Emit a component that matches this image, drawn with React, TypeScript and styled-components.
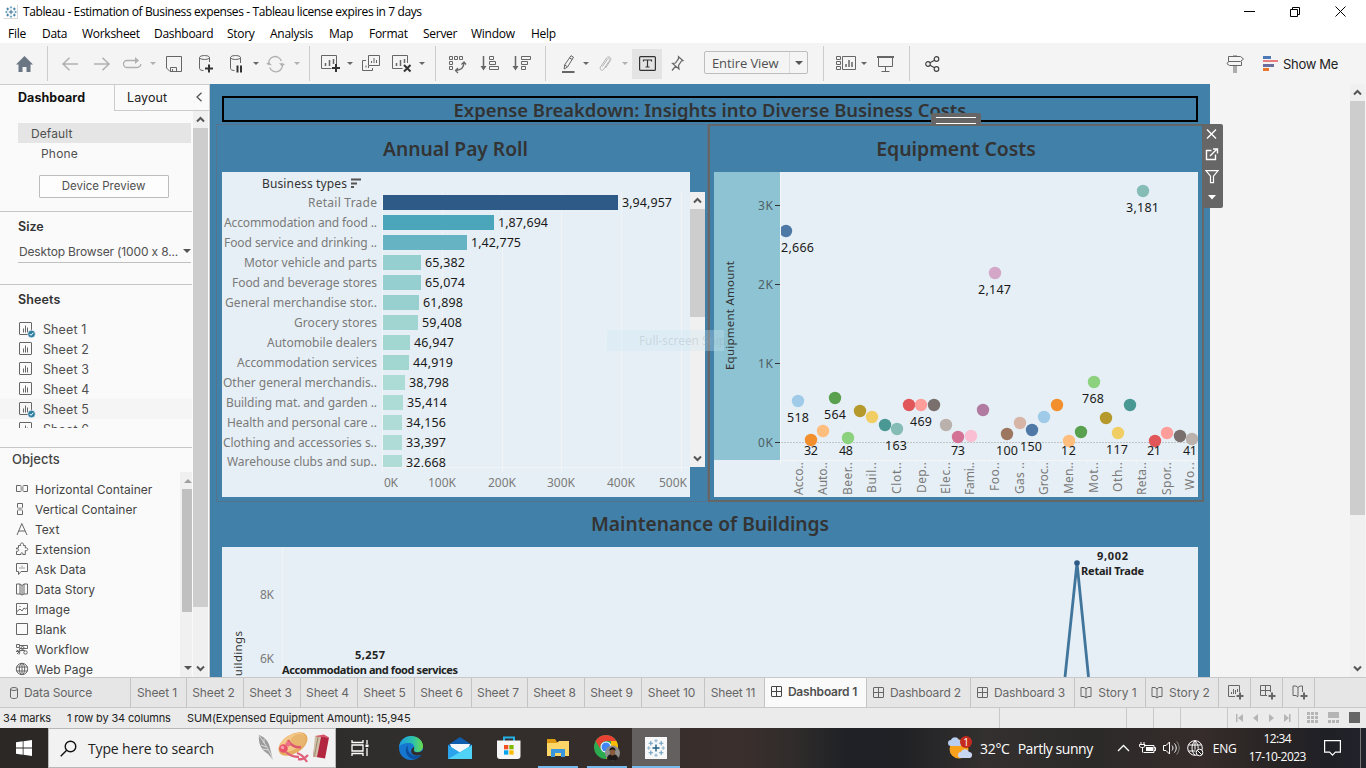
import React from "react";
import styled, { createGlobalStyle } from "styled-components";

const UI = `"Open Sans", "Noto Sans", sans-serif`;
const BOOK = `"Noto Sans", "Open Sans", sans-serif`;
const BENTON = `Inter, "Liberation Sans", sans-serif`;

const GlobalStyle = createGlobalStyle`
  * { box-sizing: border-box; }
  body { margin: 0; overflow: hidden; background: #fff; font-family: ${UI}; font-feature-settings: "calt" 0; }
  svg { display: block; flex: none; overflow: visible; }
`;

const Window = styled.div`
  width: 1366px;
  height: 768px;
  display: flex;
  flex-direction: column;
  overflow: hidden;
`;

const Txt = styled.span<{ $s?: number; $ls?: number; $c?: string; $w?: number; $f?: string }>`
  font-family: ${(p) => p.$f || BENTON};
  font-size: ${(p) => p.$s || 12}px;
  letter-spacing: ${(p) => p.$ls || 0}px;
  color: ${(p) => p.$c || "#505050"};
  font-weight: ${(p) => p.$w || 400};
  white-space: nowrap;
`;

/* ---------- title bar and menu ---------- */
const TitleBar = styled.header`
  height: 24px;
  display: flex;
  align-items: center;
  padding: 0 0 2px 3px;
`;
const AppIcon = styled.div`
  width: 15px;
  height: 15px;
  margin: 1px 5px 0 0;
  border: 1px solid #d8d8d8;
  border-left-color: #fff;
  border-top-color: #fff;
`;
const WindowButtons = styled.div`
  margin-left: auto;
  display: flex;
  gap: 35px;
  padding-right: 20px;
  align-items: center;
  height: 20px;
`;
const MenuBar = styled.nav`
  height: 19px;
  display: flex;
  align-items: center;
  padding-left: 8px;
`;
const MenuItem = styled.div<{ $w: number }>`
  width: ${(p) => p.$w}px;
  font: 12px ${UI};
  letter-spacing: -0.28px;
  white-space: nowrap;
  color: #000;
`;

/* ---------- toolbar ---------- */
const Toolbar = styled.div`
  height: 41px;
  background: #f4f4f4;
  display: flex;
  align-items: center;
`;
const Tool = styled.div<{ $ml: number; $w: number }>`
  margin-left: ${(p) => p.$ml}px;
  width: ${(p) => p.$w}px;
  flex: none;
  display: flex;
  justify-content: center;
`;
const Sep = styled.div<{ $ml: number }>`
  margin-left: ${(p) => p.$ml}px;
  width: 1px;
  height: 35px;
  background: #ccc;
  flex: none;
`;
const CaretBox = styled.div<{ $ml: number; $c?: string }>`
  margin-left: ${(p) => p.$ml}px;
  border: 3px solid transparent;
  border-top: 3px solid ${(p) => p.$c || "#666"};
  border-bottom: 0;
  flex: none;
`;
const TextToggle = styled.div`
  margin-left: 4px;
  width: 30px;
  height: 30px;
  background: #e4e4e4;
  display: flex;
  align-items: center;
  justify-content: center;
`;
const Select = styled.div`
  margin-left: 20px;
  width: 104px;
  height: 23px;
  border: 1px solid #bdbdbd;
  border-radius: 2px;
  display: flex;
  align-items: center;
  justify-content: space-between;
  padding-left: 7px;
  margin-bottom: 2px;
`;
const SelectArrow = styled.div`
  width: 18px;
  height: 21px;
  border-left: 1px solid #dcdcdc;
  display: flex;
  align-items: center;
  justify-content: center;
`;
const Triangle = styled.div<{ $s?: number; $c?: string; $up?: boolean }>`
  border: ${(p) => p.$s || 4}px solid transparent;
  border-${(p) => (p.$up ? "bottom" : "top")}-color: ${(p) => p.$c || "#555"};
  border-${(p) => (p.$up ? "top" : "bottom")}-width: 0;
`;

/* ---------- side pane ---------- */
const Main = styled.div`
  height: 593px;
  display: flex;
  background: #f4f4f4;
  overflow: hidden;
`;
const Side = styled.aside`
  width: 210px;
  background: #fafafa;
  border-top: 1px solid #ccc;
  border-right: 1px solid #ccc;
  display: flex;
  flex-direction: column;
  flex: none;
`;
const SideTabs = styled.div`
  display: flex;
  height: 26px;
  flex: none;
`;
const SideTab = styled.div<{ $on?: boolean }>`
  width: ${(p) => (p.$on ? 114 : 95)}px;
  padding: ${(p) => (p.$on ? "0 0 2px 18px" : "0 7px 1px 12px")};
  border-left: ${(p) => (p.$on ? 0 : 1)}px solid #ccc;
  border-bottom: ${(p) => (p.$on ? 0 : 1)}px solid #ccc;
  display: flex;
  align-items: center;
  justify-content: space-between;
`;
const SideBody = styled.div`
  flex: 1;
  display: flex;
  min-height: 0;
`;
const SideContent = styled.div`
  width: 192px;
  display: flex;
  flex-direction: column;
  margin-right: 1px;
`;
const Section = styled.section<{ $h?: number; $line?: boolean; $pt?: number }>`
  height: ${(p) => (p.$h ? p.$h + "px" : "auto")};
  ${(p) => (p.$h ? "flex: none;" : "flex: 1; min-height: 0;")}
  padding-top: ${(p) => p.$pt || 0}px;
  border-bottom: ${(p) => (p.$line ? "1px solid #c6c6c6" : "0")};
  display: flex;
  flex-direction: column;
`;
const DeviceRow = styled.div<{ $on?: boolean }>`
  margin-left: 18px;
  height: 20px;
  flex: none;
  margin-right: 1px;
  padding-left: ${(p) => (p.$on ? 13 : 23)}px;
  background: ${(p) => (p.$on ? "#e5e5e5" : "none")};
  display: flex;
  align-items: center;
`;
const PreviewButton = styled.button`
  margin: 12px 0 0 39px;
  width: 130px;
  height: 23px;
  padding: 0 1px 2px 0;
  border: 1px solid #bdbdbd;
  border-radius: 1px;
  background: #fdfdfd;
  line-height: 18px;
`;
const Heading = styled.div<{ $pt: number; $pl?: number }>`
  padding: ${(p) => p.$pt}px 0 0 ${(p) => p.$pl ?? 18}px;
  line-height: 18px;
  height: ${(p) => p.$pt + 18}px;
  flex: none;
`;
const SizePicker = styled.div`
  margin: 7px 1px 0 18px;
  height: 22px;
  padding: 0 0 1px 1px;
  border-bottom: 1px solid #c0c0c0;
  display: flex;
  align-items: center;
  justify-content: space-between;
`;
const SheetList = styled.div`
  margin-top: 12px;
  height: 109px;
  overflow: hidden;
`;
const SheetRow = styled.div<{ $hover?: boolean }>`
  height: 20px;
  padding-left: 19px;
  display: flex;
  align-items: center;
  gap: 8px;
  background: ${(p) => (p.$hover ? "#f5f5f5" : "none")};
`;
const ObjectsArea = styled.div`
  flex: 1;
  min-height: 0;
  margin-top: 5px;
  display: flex;
  justify-content: space-between;
  overflow: hidden;
`;
const ObjectList = styled.div`
  padding: 7px 0 0 15px;
`;
const ObjectRow = styled.div`
  height: 20px;
  display: flex;
  align-items: center;
  gap: 6px;
`;
const InnerScroll = styled.div`
  width: 12px;
  background: #f0f0f0;
  display: flex;
  flex-direction: column;
  align-items: flex-end;
  padding: 7px 0 7px 2px;
  justify-content: space-between;
`;
const InnerThumb = styled.div`
  width: 10px;
  height: 123px;
  background: #c0c0c0;
  margin: 6px 0 auto;
`;
const Scroll = styled.div<{ $h?: number }>`
  width: 15px;
  ${(p) => (p.$h ? `height: ${p.$h}px;` : "")}
  background: #f0f0f0;
  display: flex;
  flex-direction: column;
  justify-content: space-between;
  align-items: center;
  flex: none;
`;
const ScrollEnd = styled.div`
  height: 17px;
  display: flex;
  align-items: center;
  flex: none;
`;
const Thumb = styled.div<{ $h: number }>`
  width: 15px;
  height: ${(p) => p.$h}px;
  background: #cdcdcd;
  margin-bottom: auto;
  flex: none;
`;

/* ---------- dashboard ---------- */
const Canvas = styled.main`
  width: 1000px;
  background: #4180a8;
  padding: 12px 12px 0;
  flex: none;
`;
const TitleBox = styled.div`
  height: 26px;
  border: 2px solid #000;
  display: flex;
  justify-content: center;
  align-items: center;
  overflow: hidden;
  padding-top: 1px;
`;
const ChartTitle = styled.h2<{ $h: number; $pr?: number; $pb?: number }>`
  margin: 0;
  padding: 0 ${(p) => p.$pr || 0}px ${(p) => p.$pb || 0}px 0;
  height: ${(p) => p.$h}px;
  display: flex;
  align-items: center;
  justify-content: center;
`;
const ZoneRow = styled.div`
  margin: 2px -6px 0;
  height: 378px;
  display: flex;
`;
const Zone = styled.section<{ $active?: boolean; $w: number }>`
  position: relative;
  width: ${(p) => p.$w}px;
  border: ${(p) => (p.$active ? "2px solid #666" : "1px solid #55748b")};
  padding: 0 ${(p) => (p.$active ? 4 : 0)}px;
`;
const ZoneBody = styled.div`
  display: flex;
  padding-left: 5px;
`;
const Plot = styled.svg`
  background: #e6eff5;
  font-family: ${BOOK};
  font-size: 12px;
  overflow: hidden !important;
`;
const PlotScroll = styled.div`
  padding: 20px 0 0 0;
`;
const Grip = styled.div`
  position: absolute;
  left: 221px;
  top: -13px;
  width: 50px;
  height: 12px;
  background: #666;
  border-radius: 2px 2px 0 0;
  padding: 4px 5px;
  &::before {
    content: "";
    display: block;
    height: 5px;
    border-top: 1px solid #fff;
    border-bottom: 1px solid #fff;
  }
`;
const ZoneTools = styled.div`
  position: absolute;
  left: 492px;
  top: -2px;
  width: 21px;
  height: 84px;
  background: #666;
  border-radius: 0 2px 2px 0;
`;
const Ghost = styled.div`
  position: absolute;
  left: 390px;
  top: 205px;
  width: 117px;
  height: 21px;
  background: rgba(205, 232, 245, 0.3);
  display: flex;
  align-items: center;
  padding: 0 0 2px 32px;
  z-index: 2;
`;

/* ---------- bottom strips ---------- */
const TabStrip = styled.div`
  height: 31px;
  background: #e6e6e6;
  border-top: 1px solid #c8c8c8;
  border-bottom: 1px solid #c8c8c8;
  display: flex;
`;
const Tab = styled.div<{ $w: number; $on?: boolean }>`
  width: ${(p) => p.$w}px;
  flex: none;
  border-right: 1px solid #c4c4c4;
  background: ${(p) => (p.$on ? "#fafafa" : "none")};
  display: flex;
  align-items: center;
  justify-content: center;
  gap: 5px;
  padding: 0 3px ${(p) => (p.$on ? 2 : 0)}px 0;
`;
const SourceTab = styled(Tab)`
  justify-content: flex-start;
  padding-left: 9px;
`;
const AddTab = styled(Tab)`
  padding: 0 0 0 1px;
`;
const Status = styled.div`
  height: 20px;
  background: #ebebeb;
  display: flex;
  align-items: center;
`;
const StatusText = styled.div<{ $w: number }>`
  width: ${(p) => p.$w}px;
  flex: none;
  padding: 0 0 2px 3px;
  line-height: 16px;
`;
const StatusCell = styled.div<{ $w: number }>`
  width: ${(p) => p.$w}px;
  height: 20px;
  border-left: 1px solid #c8c8c8;
  flex: none;
  display: flex;
  align-items: center;
  padding-bottom: 1px;
`;
const Taskbar = styled.footer`
  height: 40px;
  display: flex;
  align-items: center;
  background: linear-gradient(90deg, #2b2826 0, #2b2826 10%, #302e2d 28%, #352d2a 45%, #3b2f2d 54%, #302c2b 58%, #1f2126 62%, #202125 66%, #33302f 72%, #2c2a29 80%, #352c2b 88%, #292524 93%, #1f2026 97%, #22242b 100%);
`;
const StartButton = styled.div`
  width: 48px;
  padding-left: 16px;
`;
const SearchBox = styled.div`
  width: 288px;
  height: 40px;
  background: #f2f2f2;
  border: 1px solid #b8b8b8;
  display: flex;
  align-items: center;
  padding-left: 11px;
  gap: 11px;
`;
const AppButton = styled.div<{ $w: number; $on?: boolean; $line?: number }>`
  position: relative;
  width: ${(p) => p.$w}px;
  height: 40px;
  flex: none;
  background: ${(p) => (p.$on ? "#63605f" : "none")};
  display: flex;
  align-items: center;
  justify-content: center;
  &::after {
    content: "";
    position: absolute;
    bottom: 0;
    left: 50%;
    width: ${(p) => p.$line || 0}px;
    margin-left: ${(p) => -(p.$line || 0) / 2}px;
    height: 2px;
    background: #76b9ed;
  }
`;
const Tray = styled.div<{ $ml: number }>`
  margin-left: ${(p) => p.$ml}px;
  flex: none;
  display: flex;
`;
const Clock = styled.div`
  width: 66px;
  margin-left: 8px;
  margin-right: 1px;
  height: 37px;
  display: flex;
  flex-direction: column;
  align-items: center;
  line-height: 18px;
`;

/* ---------- icons ---------- */
type IconProps = { w: number; h: number; c?: string; sw?: number; children: React.ReactNode };
const Icon = ({ w, h, c = "#666", sw = 1, children }: IconProps) => (
  <svg width={w} height={h} viewBox={`0 0 ${w} ${h}`} fill="none" stroke={c} strokeWidth={sw}>
    {children}
  </svg>
);

const TableauMark = ({ size, light }: { size: number; light?: boolean }) => (
  <svg width={size} height={size} viewBox="0 0 22 22" stroke={light ? "#6d9fbe" : "#2f7297"} strokeWidth={light ? 1.1 : 1.4} fill="none">
    <path d="M11 7.500v7M7.500 11h7" stroke="#1f5f87" strokeWidth="1.400" />
    <path d="M11 2v3.500M9.300 3.700h3.400M11 16.500v3.500M9.300 18.300h3.400M3.700 9.300v3.400M2 11h3.500M18.300 9.300v3.400M16.500 11h3.500" stroke={light ? "#8fb6cd" : "#5b97b8"} />
    <path d="M5.800 4v4.500M3.600 6.200h4.500M16.200 4v4.500M13.900 6.200h4.500M5.800 13.500v4.500M3.600 15.800h4.500M16.200 13.500v4.500M13.900 15.800h4.500" />
  </svg>
);

const ScrollArrow = ({ down }: { down?: boolean }) => (
  <Icon w={9} h={7} c="#555" sw={2}>
    <path d={down ? "M1 1.500l3.500 3.500 3.500-3.500" : "M1 5.500l3.500-3.500 3.500 3.500"} />
  </Icon>
);

const SheetIcon = ({ used }: { used?: boolean }) => (
  <Icon w={16} h={16}>
    <rect x="0.500" y="1.500" width="12" height="12" rx="0.500" />
    <path d="M4.500 7.500v4M6.500 4.500v7M8.500 6.500v5" />
    {used && (
      <>
        <circle cx="12.500" cy="13" r="3.800" fill="#2f7fa5" stroke="#fafafa" strokeWidth="0.600" />
        <path d="M10.800 13l1.200 1.300 2.200-2.500" stroke="#fff" />
      </>
    )}
  </Icon>
);

const GridIcon = ({ c = "#666" }: { c?: string }) => (
  <Icon w={12} h={12} c={c}>
    <rect x="0.500" y="0.500" width="10" height="10" rx="0.500" />
    <path d="M5.500 0.500v10M0.500 5.500h10" />
  </Icon>
);
const BookIcon = () => (
  <Icon w={13} h={13}>
    <path d="M6 3L4 1.500H1v9h3L6 12l2-1.500h3v-9H8zM6 3v9" />
  </Icon>
);

const objects: [string, React.ReactNode][] = [
  ["Horizontal Container", <><path d="M1.500 3.500h4v6h-4zM8.500 3.500h4v6h-4z" /><path d="M5.500 4h3v5h-3z" fill="#aaa" stroke="#ccc" /></>],
  ["Vertical Container", <><path d="M2.500 1.500h5v4h-5zM2.500 8.500h5v4h-5z" /><path d="M3 5.500h4v3H3z" fill="#aaa" stroke="#ccc" /></>],
  ["Text", <path d="M2 13L6.800 1.500 12 13M3.600 9h6.600" />],
  ["Extension", <path d="M3.500 6V3.500h2.200c-.6-2 .2-2.500 1.300-2.500s1.900.6 1.300 2.500h2V6c1.600-.5 2.500.2 2.500 1.300S12 9 10.300 8.500v4H7.800c.3-1.200-.2-1.700-.9-1.700s-1.300.6-.9 1.700H1.500V9.200c1.300.5 2.200-.2 2.200-1.100S2.700 6.500 1.500 7V6z" />],
  ["Ask Data", <><path d="M1.500 1.500h11v8H6l-2.500 3V9.500h-2z" /><path d="M5 7V5M7 7V3.500M9 7V5" stroke="#999" /></>],
  ["Data Story", <path d="M7 3.500L5 2H1.500v10H5l2 1 2-1h3.500V2H9zM7 3.500V13M5 2v10M9 2v10" />],
  ["Image", <><path d="M1.500 1.500h11v11h-11z" /><path d="M2 9.500l3-2.500 2 2 2-3 1.500 1 2-1.500M4.500 4.500h1" /></>],
  ["Blank", <path d="M1.500 1.500h11v11h-11z" />],
  ["Workflow", <><path d="M1.500 2.500h3v3h-3zM5 3.500h7.500v3H4.500v2H10M1 9.500h4l-1 3M1.500 8l3 1.500L2 12" /><circle cx="7.500" cy="6" r="1.500" /><circle cx="10.500" cy="10.500" r="1.700" /></>],
  ["Web Page", <><circle cx="7" cy="7" r="5.700" /><ellipse cx="7" cy="7" rx="2.700" ry="5.700" /><path d="M1.500 5h11M1.500 9h11M7 1.300v11.400" /></>],
];

/* ---------- data ---------- */
const menu: [string, number][] = [
  ["File", 34], ["Data", 40], ["Worksheet", 72], ["Dashboard", 73], ["Story", 43], ["Analysis", 59],
  ["Map", 40], ["Format", 54], ["Server", 48], ["Window", 60], ["Help", 40],
];

// label, label width, bar width, value, value width, bar colour
const payroll: [string, number, number, string, number, string][] = [
  ["Retail Trade", 69, 235, "3,94,957", 50, "#2e5a87"],
  ["Accommodation and food ..", 153, 111, "1,87,694", 50, "#4ba6bc"],
  ["Food service and drinking ..", 153, 84, "1,42,775", 50, "#66b4c3"],
  ["Motor vehicle and parts", 133, 38, "65,382", 40, "#95cfd0"],
  ["Food and beverage stores", 145, 38, "65,074", 40, "#95cfd0"],
  ["General merchandise stor..", 152, 36, "61,898", 40, "#98d0d0"],
  ["Grocery stores", 83, 35, "59,408", 40, "#a0d5d1"],
  ["Automobile dealers", 110, 27, "46,947", 40, "#a2d6d1"],
  ["Accommodation services", 140, 26, "44,919", 40, "#a2d6d1"],
  ["Other general merchandis..", 154, 22, "38,798", 40, "#addbd6"],
  ["Building mat. and garden ..", 151, 20, "35,414", 40, "#addbd6"],
  ["Health and personal care ..", 150, 19, "34,156", 40, "#b0dcd7"],
  ["Clothing and accessories s..", 154, 19, "33,397", 40, "#b0dcd7"],
  ["Warehouse clubs and sup..", 150, 19, "32,668", 40, "#b0dcd7"],
];
const payAxis: [string, number, number][] = [
  ["0K", 384, 14], ["100K", 428, 28], ["200K", 488, 28], ["300K", 547, 28], ["400K", 607, 28], ["500K", 659, 28],
];

const dots: [number, number, string][] = [
  [786, 231, "#4e79a7"], [798, 401, "#a0cbe8"], [811, 440, "#f28e2b"], [823, 431, "#ffbe7d"], [835, 398, "#59a14f"],
  [848, 438, "#8cd17d"], [860, 411, "#b6992d"], [872, 417, "#f1ce63"], [885, 425, "#499894"], [897, 429, "#86bcb6"],
  [909, 405, "#e15759"], [921, 405, "#ff9d9a"], [934, 405, "#79706e"], [946, 425, "#bab0ac"], [958, 437, "#d37295"],
  [971, 436, "#fabfd2"], [983, 410, "#b07aa1"], [995, 273, "#d4a6c8"], [1007, 434, "#9d7660"], [1020, 423, "#d7b5a6"],
  [1032, 430, "#4e79a7"], [1044, 417, "#a0cbe8"], [1057, 405, "#f28e2b"], [1069, 441, "#ffbe7d"], [1081, 432, "#59a14f"],
  [1094, 382, "#8cd17d"], [1106, 418, "#b6992d"], [1118, 433, "#f1ce63"], [1130, 405, "#499894"], [1143, 191, "#86bcb6"],
  [1155, 441, "#e15759"], [1167, 433, "#ff9d9a"], [1180, 436, "#79706e"], [1192, 439, "#bab0ac"],
];
const dotLabels: [string, number, number, number][] = [
  ["2,666", 781, 248, 33], ["3,181", 1126, 208, 33], ["2,147", 978, 290, 33], ["518", 787, 418, 22], ["32", 804, 451, 14],
  ["564", 824, 415, 22], ["48", 839, 451, 14], ["163", 885, 446, 22], ["469", 910, 422, 22], ["73", 951, 451, 14],
  ["100", 996, 451, 22], ["150", 1020, 447, 22], ["12", 1061, 451, 15], ["768", 1082, 399, 22], ["117", 1106, 450, 22],
  ["21", 1147, 451, 14], ["41", 1183, 451, 14],
];
const categories: [string, number, number][] = [
  ["Acco..", 799, 495], ["Auto..", 823, 495], ["Beer..", 848, 495], ["Buil..", 872, 493], ["Clot..", 897, 494], ["Dep..", 922, 493],
  ["Elec..", 946, 494], ["Fami..", 970, 495], ["Foo..", 995, 491], ["Gas ..", 1020, 494], ["Groc..", 1044, 495], ["Men..", 1069, 494],
  ["Mot..", 1094, 493], ["Oth..", 1118, 492], ["Reta..", 1142, 495], ["Spor..", 1167, 495], ["Wo..", 1190, 490],
];

const PayrollChart = () => (
  <Plot width={468} height={325} viewBox="222 172 468 325">
    <path d="M382.500 192v280M442.500 192v280M502.500 192v280M561.500 192v280M621.500 192v280M681.500 192v280M382 467.500h308" stroke="#f1f4f6" />
    <text x="262" y="188" textLength="85" fill="#333">Business types</text>
    <path d="M351 179.500h10M351 183.500h6M351 187h3" stroke="#555" strokeWidth="2" />
    <clipPath id="rows"><rect x="222" y="190" width="468" height="277" /></clipPath>
    <g clipPath="url(#rows)">
      {payroll.map(([name, lw, bw, value, vw, color], i) => (
        <g key={name}>
          <text x={377 - lw} y={207 + i * 20 - (i === 13 ? 1 : 0)} textLength={lw} fill="#7a7a7a">{name}</text>
          <rect x="383" y={195 + i * 20} width={bw} height="15" fill={color} />
          <text x={387 + bw} y={207 + i * 20} textLength={vw} fill="#1a1a1a" fontSize="12.500">{value}</text>
        </g>
      ))}
    </g>
    {payAxis.map(([t, x, w]) => (
      <text key={t} x={x} y="487" textLength={w} fill="#7a7a7a">{t}</text>
    ))}
  </Plot>
);

const EquipmentChart = () => (
  <Plot width={484} height={325} viewBox="714 172 484 325">
    <rect x="714" y="172" width="66" height="288" fill="#8dc3d2" />
    <path d="M780.500 172v293M780 460.500h418" stroke="#f3f5f6" />
    <path d={[793, 817, 842, 866, 891, 915, 940, 964, 989, 1013, 1038, 1062, 1087, 1111, 1136, 1160, 1185].map((x) => `M${x}.500 460v3`).join("")} stroke="#f3f5f6" />
    <path d="M781 442.500h417" stroke="#bfc4c6" strokeDasharray="2 1" />
    {[["3K", 205], ["2K", 284], ["1K", 363], ["0K", 442]].map(([t, y]) => (
      <g key={t}>
        <text x="758" y={Number(y) + 5} textLength="15" fill="#4f6168">{t}</text>
        <path d={`M775 ${y}.500h5`} stroke="#333" />
      </g>
    ))}
    <text transform="translate(734 370) rotate(-90)" textLength="109" fill="#333" fontSize="11.500">Equipment Amount</text>
    <clipPath id="pane"><rect x="781" y="172" width="417" height="288" /></clipPath>
    <g clipPath="url(#pane)">
      {dots.map(([x, y, c]) => <circle key={x} cx={x} cy={y} r="6.200" fill={c} />)}
    </g>
    {dotLabels.map(([t, x, y, w]) => (
      <text key={x} x={x} y={y + 4} textLength={w} fill="#1a1a1a" fontSize="12.500">{t}</text>
    ))}
    {categories.map(([t, x, y]) => (
      <text key={x} transform={`translate(${x + 4} ${y}) rotate(-90)`} textLength={y - 462} fill="#7a7a7a">{t}</text>
    ))}
  </Plot>
);

const MaintenanceChart = () => (
  <Plot width={976} height={130} viewBox="222 547 976 130">
    <path d="M282.500 547v130" stroke="#f1f4f6" />
    <text x="260" y="599" textLength="14" fill="#7a7a7a">8K</text>
    <text x="260" y="663" textLength="14" fill="#7a7a7a">6K</text>
    <text transform="translate(242 684) rotate(-90)" textLength="53" fill="#333" fontSize="11.500">Buildings</text>
    <path d="M1065 677L1077 563L1088.500 677" fill="none" stroke="#41759c" strokeWidth="2.800" />
    <circle cx="1077" cy="563" r="2.800" fill="#2e5a87" />
    <g fontWeight="700" fontSize="11" fill="#222">
      <text x="1097" y="560" textLength="31">9,002</text>
      <text x="1081" y="575" textLength="63">Retail Trade</text>
      <text x="355" y="659" textLength="30">5,257</text>
      <text x="282" y="674" textLength="176">Accommodation and food services</text>
    </g>
  </Plot>
);

const T = "#333";
const sheetTabs: [string, number][] = [
  ["Sheet 1", 56], ["Sheet 2", 57], ["Sheet 3", 57], ["Sheet 4", 57], ["Sheet 5", 57], ["Sheet 6", 57],
  ["Sheet 7", 56], ["Sheet 8", 57], ["Sheet 9", 57], ["Sheet 10", 63], ["Sheet 11", 60],
];

export default function App() {
  return (
    <Window>
      <GlobalStyle />
      <TitleBar>
        <AppIcon><TableauMark size={14} /></AppIcon>
        <Txt $f={UI} $c="#000" $s={12} $ls={-0.39}>Tableau - Estimation of Business expenses - Tableau license expires in 7 days</Txt>
        <WindowButtons>
          <Icon w={11} h={11} c="#000"><path d="M0 5.500h11" /></Icon>
          <Icon w={10} h={11} c="#000"><path d="M.5 3.500h7v7h-7zM2.500 3.500v-2h7v7h-2" /></Icon>
          <Icon w={11} h={11} c="#000"><path d="M.5 .5l10 10M10.500 .5l-10 10" /></Icon>
        </WindowButtons>
      </TitleBar>
      <MenuBar>{menu.map(([t, w]) => <MenuItem key={t} $w={w}>{t}</MenuItem>)}</MenuBar>

      <Toolbar>
        <Tool $ml={16} $w={17}><Icon w={17} h={16} c="none"><path d="M8.500 0L17 8.500h-2.500V16h-4v-5h-4v5h-4V8.500H0z" fill="#6a7684" /></Icon></Tool>
        <Sep $ml={14} />
        <Tool $ml={14} $w={16}><Icon w={16} h={14} c="#b0b0b0" sw={1.5}><path d="M16 7H1M7.500 .7L1 7l6.500 6.300" /></Icon></Tool>
        <Tool $ml={16} $w={16}><Icon w={16} h={14} c="#b0b0b0" sw={1.5}><path d="M0 7h15M8.500 .7L15 7l-6.500 6.300" /></Icon></Tool>
        <Tool $ml={13} $w={19}><Icon w={19} h={12} c="#b0b0b0" sw={1.3}><path d="M15 2.500H4a3.500 3.500 0 000 7h10a3.500 3.500 0 003.800-3.500" /><path d="M12 -1l4 3.500-4 3.500z" fill="#b0b0b0" stroke="none" /></Icon></Tool>
        <CaretBox $ml={8} $c="#b0b0b0" />
        <Tool $ml={10} $w={16}><Icon w={16} h={16}><path d="M.5 .5h15v15H4l-3.500-3.500zM4.500 15.500v-4h6v4M6.500 13v2.500" /></Icon></Tool>
        <Tool $ml={16} $w={15}><Icon w={15} h={18}><path d="M11.500 7V2.500M1.500 2.500v11c0 1.300 2 2 4 2" /><ellipse cx="6.500" cy="2.500" rx="5" ry="2" /><path d="M11 9.500v8M7 13.500h8" stroke="#333" strokeWidth="2" /></Icon></Tool>
        <Tool $ml={16} $w={14}><Icon w={14} h={18}><path d="M11.500 8V2.500M1.500 2.500v11c0 1.300 2 2 4 2" /><ellipse cx="6.500" cy="2.500" rx="5" ry="2" /><path d="M8.500 10.500v7M12 10.500v7" stroke="#333" strokeWidth="2" /></Icon></Tool>
        <CaretBox $ml={10} />
        <Tool $ml={8} $w={17}><Icon w={17} h={14} c="#b0b0b0" sw={1.3}><path d="M2 8A6.300 6.300 0 0114.300 4M15 6A6.300 6.300 0 012.700 10.500" /><path d="M-1 7l3-2 3 3.500zM18 7l-3 2.500L12 6z" fill="#b0b0b0" stroke="none" /></Icon></Tool>
        <CaretBox $ml={10} $c="#b0b0b0" />
        <Sep $ml={9} />
        <Tool $ml={11} $w={19}><Icon w={19} h={17}><path d="M15.500 9V.5H.5v13h10" /><path d="M4.500 11V8M8.500 11V5M12.500 9V4" strokeWidth="1.500" /><path d="M15 9v8M11 13h8" stroke="#333" strokeWidth="2" /></Icon></Tool>
        <CaretBox $ml={7} />
        <Tool $ml={9} $w={18}><Icon w={18} h={17}><path d="M6.500 .5h11v10h-11zM4 5.500H.5v10h10V13M9.500 8V6M12 8V3M14.500 8V5M4 12.500v-2M6.500 13v-2" /></Icon></Tool>
        <Tool $ml={12} $w={20}><Icon w={20} h={17}><path d="M15.500 8V.5H.5v13h10" /><path d="M4.500 11V8M8.500 11V5M12.500 8V4" strokeWidth="1.500" /><path d="M12 10l6.500 6.500M18.500 10L12 16.500" stroke="#333" strokeWidth="2" /></Icon></Tool>
        <CaretBox $ml={7} />
        <Sep $ml={10} />
        <Tool $ml={13} $w={17}><Icon w={17} h={18}><path d="M.5 1.500h3v3h-3zM5.500 1.500h3v3h-3zM10.500 1.500h3v3h-3zM.5 6.500h3v3h-3zM.5 11.500h3v3h-3z" /><path d="M15 7.500c0 5-3 7.500-8 8M12.500 9.500l2.500-2.500 2 2.500M9 13l-2.500 2.500L9 18" strokeWidth="1.300" /></Icon></Tool>
        <Tool $ml={15} $w={18}><Icon w={18} h={15}><path d="M2.500 0v12" strokeWidth="1.500" /><path d="M-.5 10h6l-3 4.500z" fill="#666" stroke="none" /><path d="M8.500 .5h4v3h-4zM8.500 5.500h6v3h-6zM8.500 10.500h9v3h-9z" /></Icon></Tool>
        <Tool $ml={14} $w={18}><Icon w={18} h={15}><path d="M2.500 0v12" strokeWidth="1.500" /><path d="M-.5 10h6l-3 4.500z" fill="#666" stroke="none" /><path d="M8.500 .5h9v3h-9zM8.500 5.500h6v3h-6zM8.500 10.500h4v3h-4z" /></Icon></Tool>
        <Sep $ml={14} />
        <Tool $ml={16} $w={13}><Icon w={13} h={18}><path d="M9 .7l2.500 1.500L5.500 12l-3.300 2 .4-4zM7.500 3l3 1.500M2.800 10l2.500 1.700" /><path d="M0 17h12.500" strokeWidth="2" /></Icon></Tool>
        <CaretBox $ml={8} />
        <Tool $ml={10} $w={13}><Icon w={13} h={16} c="#b5b5b5"><path d="M3.500 10.500l5-7.500c1.500-1.500 3 0 2 1.500l-6 9c-1.500 1.800-4.500 0-3-2.500l6-9c2-2.500 5.500-.5 4 2.500l-5 7.500" /></Icon></Tool>
        <CaretBox $ml={10} $c="#b0b0b0" />
        <TextToggle><Icon w={17} h={15} c="#333" sw={1.2}><rect x=".6" y=".6" width="15.800" height="13.800" rx="1" /><path d="M4.500 5.500V4h8v1.500M8.500 4v7M6.500 11h4" /></Icon></TextToggle>
        <Tool $ml={8} $w={14}><Icon w={12} h={15} sw={1.2}><path d="M7.500 .7l4.500 4-1.500 .3-3 4.500 .5 3.500L1.500 7.500l3-.5 3-4.300zM4.800 10L1 14.500" /></Icon></Tool>
        <Select><Txt $f={UI} $s={13} $ls={-0.1}>Entire View</Txt><SelectArrow><Triangle /></SelectArrow></Select>
        <Sep $ml={15} />
        <Tool $ml={12} $w={20}><Icon w={20} h={15}><path d="M.5 .5h4v3h-4zM.5 5.500h4v3h-4zM.5 10.500h4v3h-4zM6.500 .5h13v13h-13z" /><path d="M10 11V8M13 11V4M16 11V6" strokeWidth="1.500" /></Icon></Tool>
        <CaretBox $ml={5} />
        <Tool $ml={10} $w={17}><Icon w={17} h={16}><path d="M0 1h17" strokeWidth="2" /><path d="M1.500 2v8.500h14V2M8.500 11v4M4.500 15.500h8" /></Icon></Tool>
        <Sep $ml={15} />
        <Tool $ml={15} $w={15}><Icon w={15} h={16} c="#444" sw={1.2}><circle cx="11.500" cy="3" r="2.300" /><circle cx="3" cy="8" r="2.300" /><circle cx="11.500" cy="13" r="2.300" /><path d="M5 6.800l4.500-2.600M5 9.200l4.500 2.600" /></Icon></Tool>
        <Tool $ml={286} $w={18}><Icon w={18} h={18}><path d="M2.500 1.500h12l3 2.500-3 2.500h-12zM15.500 6.500v4h-12L.8 8.500 3 6.500M8 0v1.500M10 0v1.500M8 10.500V18M10 10.500V18" /></Icon></Tool>
        <Tool $ml={19} $w={15}><Icon w={15} h={15} c="none"><path d="M0 0h8v3H0z" fill="#4e79b7" /><path d="M0 4h15v2H0z" fill="#e15759" opacity=".75" /><path d="M0 8h11v3H0z" fill="#6b6f9e" /><path d="M0 12h6v3H0z" fill="#e8762d" /></Icon></Tool>
        <Tool $ml={5} $w={55}><Txt $s={13} $c="#222" $ls={-0.3}>Show Me</Txt></Tool>
      </Toolbar>

      <Main>
        <Side>
          <SideTabs>
            <SideTab $on><Txt $s={12.5} $w={700} $c="#111" $ls={0.05}>Dashboard</Txt></SideTab>
            <SideTab><Txt $s={12.5} $c="#222" $ls={0.1}>Layout</Txt><Icon w={6} h={10} c="#555" sw={1.3}><path d="M5.500 .7L1 5l4.500 4.300" /></Icon></SideTab>
          </SideTabs>
          <SideBody>
            <SideContent>
              <Section $h={101} $line $pt={12}>
                <DeviceRow $on><Txt $ls={0.1}>Default</Txt></DeviceRow>
                <DeviceRow><Txt $ls={0.2}>Phone</Txt></DeviceRow>
                <PreviewButton><Txt $s={11.5}>Device Preview</Txt></PreviewButton>
              </Section>
              <Section $h={73} $line>
                <Heading $pt={4}><Txt $s={12.5} $w={600} $c={T}>Size</Txt></Heading>
                <SizePicker><Txt $s={12} $ls={-0.15}>Desktop Browser (1000 x 8...</Txt><Triangle /></SizePicker>
              </Section>
              <Section $h={163} $line>
                <Heading $pt={4}><Txt $s={12.5} $w={600} $c={T} $ls={0.1}>Sheets</Txt></Heading>
                <SheetList>
                  {[1, 2, 3, 4, 5, 6].map((n) => (
                    <SheetRow key={n} $hover={n === 5}><SheetIcon used={n === 1 || n === 5} /><Txt $s={12.5} $ls={0.1}>Sheet {n}</Txt></SheetRow>
                  ))}
                </SheetList>
              </Section>
              <Section>
                <Heading $pt={1} $pl={12}><Txt $s={13} $w={500} $c="#444">Objects</Txt></Heading>
                <ObjectsArea>
                  <ObjectList>
                    {objects.map(([t, d]) => (
                      <ObjectRow key={t}><Icon w={14} h={14}>{d}</Icon><Txt $c="#444" $ls={0.03}>{t}</Txt></ObjectRow>
                    ))}
                  </ObjectList>
                  <InnerScroll><Triangle $up $c="#a0a0a0" /><InnerThumb /><Triangle /></InnerScroll>
                </ObjectsArea>
              </Section>
            </SideContent>
            <Scroll><ScrollEnd><ScrollArrow /></ScrollEnd><Thumb $h={479} /><ScrollEnd><ScrollArrow down /></ScrollEnd></Scroll>
          </SideBody>
        </Side>

        <Canvas>
          <TitleBox><Txt $f={BOOK} $s={18.4} $w={600} $c={T}>Expense Breakdown: Insights into Diverse Business Costs</Txt></TitleBox>
          <ZoneRow>
            <Zone $w={492}>
              <ChartTitle $h={47} $pr={13}><Txt $f={BOOK} $s={19.2} $w={600} $c={T}>Annual Pay Roll</Txt></ChartTitle>
              <ZoneBody>
                <PayrollChart />
                <PlotScroll><Scroll $h={275}><ScrollEnd><ScrollArrow /></ScrollEnd><Thumb $h={108} /><ScrollEnd><ScrollArrow down /></ScrollEnd></Scroll></PlotScroll>
              </ZoneBody>
              <Ghost><Txt $f={BOOK} $s={11.8} $c="rgba(150, 165, 175, 0.32)">Full-screen Snip</Txt></Ghost>
            </Zone>
            <Zone $w={496} $active>
              <ChartTitle $h={46} $pb={2}><Txt $f={BOOK} $s={19.4} $w={600} $c={T}>Equipment Costs</Txt></ChartTitle>
              <EquipmentChart />
              <Grip />
              <ZoneTools>
                <Icon w={21} h={84} c="#fff" sw={1.4}>
                  <path d="M5 5.500l9 9M14 5.500l-9 9" />
                  <path d="M9.500 26.500h-5v9h9v-5M8 32l7-7M11 25h4.500v4.500" />
                  <path d="M4 46.700h12l-4.500 5.500v6.500h-3v-6.500z" strokeWidth="1.200" />
                  <path d="M6 71h8l-4 4.500z" fill="#fff" stroke="none" />
                </Icon>
              </ZoneTools>
            </Zone>
          </ZoneRow>
          <ChartTitle $h={45} $pb={2}><Txt $f={BOOK} $s={19.2} $w={600} $c={T}>Maintenance of Buildings</Txt></ChartTitle>
          <MaintenanceChart />
        </Canvas>
        <Tray $ml={140}><Scroll $h={593}><ScrollEnd><ScrollArrow /></ScrollEnd><Thumb $h={414} /><ScrollEnd><ScrollArrow down /></ScrollEnd></Scroll></Tray>
      </Main>

      <TabStrip>
        <SourceTab $w={131}>
          <Icon w={10} h={12}><path d="M1.500 2v8c0 2 7 2 7 0V2" /><ellipse cx="5" cy="2" rx="3.500" ry="1.500" /></Icon>
          <Txt $c="#666" $ls={-0.15}>Data Source</Txt>
        </SourceTab>
        {sheetTabs.map(([t, w]) => <Tab key={t} $w={w}><Txt $c="#666" $ls={-0.15}>{t}</Txt></Tab>)}
        <Tab $w={102} $on><GridIcon c="#444" /><Txt $w={600} $ls={-0.2}>Dashboard 1</Txt></Tab>
        <Tab $w={104}><GridIcon /><Txt $c="#666" $ls={-0.15}>Dashboard 2</Txt></Tab>
        <Tab $w={104}><GridIcon /><Txt $c="#666" $ls={-0.15}>Dashboard 3</Txt></Tab>
        <Tab $w={71}><BookIcon /><Txt $c="#666">Story 1</Txt></Tab>
        <Tab $w={73}><BookIcon /><Txt $c="#666">Story 2</Txt></Tab>
        <AddTab $w={32}><Icon w={15} h={15}><path d="M11.500 7V.5H.5v11H7M3.500 9V7M5.500 9V4M7.500 9V5M9.500 7V4" /><path d="M12 7.500v7M8.500 11h7" strokeWidth="2" /></Icon></AddTab>
        <AddTab $w={32}><Icon w={15} h={15}><path d="M10.500 7V.5H.5v10H7M5.500 .5v10M.5 5.500h10" /><path d="M12 7.500v7M8.500 11h7" strokeWidth="2" /></Icon></AddTab>
        <AddTab $w={32}><Icon w={15} h={15}><path d="M10.500 7V1H8L6 2.500 4 1H1v9.500h3l2 1.500M6 2.500v9" /><path d="M12 7.500v7M8.500 11h7" strokeWidth="2" /></Icon></AddTab>
      </TabStrip>

      <Status>
        <StatusText $w={64}><Txt $s={11} $c="#222" $ls={-0.12}>34 marks</Txt></StatusText>
        <StatusText $w={120}><Txt $s={11} $c="#222" $ls={-0.16}>1 row by 34 columns</Txt></StatusText>
        <StatusText $w={815}><Txt $s={11} $c="#222" $ls={-0.1}>SUM(Expensed Equipment Amount): 15,945</Txt></StatusText>
        <StatusCell $w={127} /><StatusCell $w={27} /><StatusCell $w={27} /><StatusCell $w={47} />
        <StatusCell $w={71}>
          <Icon w={70} h={8} c="none">
            <path d="M8 0h1.500v8H8zM15 0v8l-5-4zM30 0v8l-5-4zM41 0v8l5-4zM56 0v8l5-4zM61 0h1.500v8H61z" fill="#b5b5b5" />
          </Icon>
        </StatusCell>
        <StatusCell $w={67}>
          <Icon w={66} h={11} c="none">
            <path d="M8 0h3v3H8zM12 0h3v3h-3zM16 0h3v3h-3zM8 4h3v3H8zM12 4h3v3h-3zM16 4h3v3h-3zM8 8h3v3H8zM12 8h3v3h-3zM16 8h3v3h-3zM29 0h11v6H29zM29 8h3v3h-3zM33 8h3v3h-3zM37 8h3v3h-3z" fill="#b5b5b5" />
            <path d="M50 0h11v11H50z" fill="#666" />
          </Icon>
        </StatusCell>
      </Status>

      <Taskbar>
        <StartButton><Icon w={16} h={16} c="none"><path d="M0 2.300l6.700-1v6.300H0zM7.500 1.200L16 0v7.600H7.500zM0 8.400h6.700v6.300l-6.700-1zM7.500 8.400H16V16l-8.500-1.200z" fill="#fff" /></Icon></StartButton>
        <SearchBox>
          <Icon w={17} h={17} c="#111" sw={1.4}><circle cx="10.500" cy="6.500" r="5.300" /><path d="M6.700 10.300L.7 16.300" /></Icon>
          <Txt $f={UI} $s={14} $c="#222" $ls={-0.15}>Type here to search</Txt>
          <svg width="104" height="34" viewBox="0 0 104 34">
            <g transform="translate(32 0)">
              <path d="M2 4c6 2 10 7 11 13l3 12-5-6C4 19 1 12 2 4z" fill="#9b9b9b" />
              <path d="M2.500 5c4 6 9 12 13.500 24M4 14l5 2M6 18l5 1M7 8l0 4" stroke="#ececec" strokeWidth=".8" fill="none" />
              <ellipse cx="36" cy="13" rx="16" ry="9.500" transform="rotate(-32 36 13)" fill="#e6ac5f" />
              <ellipse cx="35" cy="11.500" rx="14" ry="7.500" transform="rotate(-32 35 11.500)" fill="#f3c888" />
              <ellipse cx="41" cy="10" rx="8" ry="6.500" transform="rotate(-32 41 10)" fill="#e9b66f" />
              <path d="M31 9c3 6 7 8 13 7" stroke="#dc5a70" strokeWidth="2.500" fill="none" />
              <circle cx="26.500" cy="17.500" r="4.300" fill="#e8526b" /><circle cx="25.500" cy="16.500" r="1.800" fill="#f79aa8" /><circle cx="31" cy="13" r="2.500" fill="#ee7186" />
              <path d="M29 21c4 4 8 5 13 5M40 22c4 1 7 4 10 9M51 24c-3 3-5 5-10 4" stroke="#e0607a" strokeWidth="2.300" fill="none" />
              <path d="M59 5l13 1.500-4 21-12-2z" fill="#b3263f" /><path d="M58 5l6 1-4 20-4-.5z" fill="#cfc0a6" /><path d="M58 5l9-1.500 5 3-8-.5z" fill="#d9566a" /><path d="M61 6l-3.500 19" stroke="#8a7b66" strokeWidth=".8" />
            </g>
          </svg>
        </SearchBox>
        <AppButton $w={48}><Icon w={18} h={16} c="#fff" sw={1.3}><path d="M1 0v2.500h11V0M1 5h11v6H1zM1 16v-2.500h11V16M16 0v4M16 8v8" /><path d="M14.500 4.500h3v2.500h-3z" fill="#fff" stroke="none" /></Icon></AppButton>
        <AppButton $w={54}>
          <svg width="24" height="24" viewBox="0 0 24 24">
            <defs>
              <linearGradient id="e1" x1="0" x2="1"><stop offset="0" stopColor="#1b9de2" /><stop offset=".6" stopColor="#2fc2a8" /><stop offset="1" stopColor="#6bdc4a" /></linearGradient>
            </defs>
            <circle cx="12" cy="12" r="12" fill="#1577cf" />
            <path d="M0 11C1 4 6 0 12 0c8 0 12 6 12 10 0 4-3 6-6 6-3 0-4-1-3-3 1-4-2-6-5-6-5 0-9 2-10 4z" fill="url(#e1)" />
            <path d="M9 9c-5 5-1 13 5 14 4 .5 7-2 8.500-4-3 1.500-7 1.500-10-.5C9 16 8 12 9 9z" fill="#0d4f9f" />
            <path d="M14.800 11c1.200 1.500-.5 2.500 .2 4 .8 1.500 4 1.700 6.500 .8 1-.3 2-1 2.500-1.800l.3 2.500-1.600 2.300c-3 1.300-7 1-9.200-.8-2.300-2-1.300-5.500 1.300-7z" fill="#322d2b" />
          </svg>
        </AppButton>
        <AppButton $w={44}>
          <svg width="24" height="22" viewBox="0 0 24 22"><path d="M0 8L12 0l12 8v4H0z" fill="#0f5fae" /><path d="M2 7h20l-3 8H5z" fill="#f4f8fb" /><path d="M0 8l12 7.500L24 8v14H0z" fill="#2aa3ea" /><path d="M24 8L0 22h24z" fill="#50d1f6" /></svg>
        </AppButton>
        <AppButton $w={53}>
          <svg width="24" height="24" viewBox="0 0 24 24"><path d="M7 5V1.500h10V5" stroke="#25b1e6" strokeWidth="2" fill="none" /><path d="M0 4.500h23.500V20a3 3 0 01-3 3H3a3 3 0 01-3-3z" fill="#f6f6f6" /><path d="M7 9h4.300v4.300H7z" fill="#f25022" /><path d="M12.300 9h4.300v4.300h-4.300z" fill="#7fba00" /><path d="M7 14.300h4.300v4.300H7z" fill="#00a4ef" /><path d="M12.300 14.300h4.300v4.300h-4.300z" fill="#ffb900" /></svg>
        </AppButton>
        <AppButton $w={46} $line={40}>
          <svg width="23" height="20" viewBox="0 0 23 20"><path d="M0 1h8l2 3h12v14H0z" fill="#dc9b10" /><path d="M0 5h10l2-2h10v15H0z" fill="#fcd667" /><path d="M4 11h14v8h-4v-4H8v4H4z" fill="#3a96dd" /></svg>
        </AppButton>
        <AppButton $w={51} $line={40}>
          <svg width="26" height="26" viewBox="0 0 26 26">
            <circle cx="12" cy="12" r="12" fill="#2da94f" />
            <path d="M1.600 6A12 12 0 0122.400 6H12a6 6 0 00-5.500 8z" fill="#e94235" />
            <path d="M22.400 6A12 12 0 0112 24l5-9V6z" fill="#fbbd04" />
            <circle cx="12" cy="12" r="5.500" fill="#fff" /><circle cx="12" cy="12" r="4.500" fill="#4285f4" />
            <circle cx="18.500" cy="18" r="7.500" fill="#8e8f8c" /><path d="M13 24c0-4 3-5 5.500-5s5.500 1 5.500 5c-3 2-8 2-11 0z" fill="#1e1a1a" /><ellipse cx="18.500" cy="17" rx="2.700" ry="3.500" fill="#8a5a3d" /><path d="M15.500 16c-.5-5 6.500-5 6 0-1.500-2-4.500-2-6 0z" fill="#161212" />
          </svg>
        </AppButton>
        <AppButton $w={48} $on $line={48}>
          <svg width="22" height="22" viewBox="0 0 22 22"><rect width="22" height="22" fill="#f7f8f9" /><TableauMark size={22} light /></svg>
        </AppButton>

        <Tray $ml={268}>
          <svg width="25" height="24" viewBox="0 0 25 24">
            <circle cx="11" cy="13" r="9.500" fill="#f7a11c" />
            <path d="M3 10a3 3 0 010-6c1-3 6-4 8 0 3 0 4 5 1 6z" fill="#b9cdf0" />
            <path d="M13 22a3 3 0 010-6c1-3 6-4 8 0 4 0 4 5 1 6z" fill="#c6d6f3" />
            <circle cx="18" cy="6" r="6" fill="#c42b1c" />
            <text x="18" y="10" textAnchor="middle" fontSize="10" fill="#fff" fontFamily="Open Sans, sans-serif">1</text>
          </svg>
        </Tray>
        <Tray $ml={7}><Txt $f={UI} $s={14} $c="#fff" $ls={-0.3}>32°C</Txt></Tray>
        <Tray $ml={8}><Txt $f={UI} $s={14} $c="#fff" $ls={-0.45}>Partly sunny</Txt></Tray>
        <Tray $ml={24}><Icon w={13} h={8} c="#fff" sw={1.3}><path d="M1 7l5.500-5.500L12 7" /></Icon></Tray>
        <Tray $ml={9}><Icon w={17} h={12} c="#fff"><path d="M5 3.500h10v7H4.500M15 5.500h1.500v3H15M2 0v2M5 0v2M.5 2.500h5.500v1.500c0 2-5.500 2-5.500 0zM3.500 5v5.500" /><path d="M7 5h7v4H7z" fill="#fff" stroke="none" /></Icon></Tray>
        <Tray $ml={7}><Icon w={17} h={14} c="#fff"><path d="M.5 4.500h2.500L6.500 1v12L3 9.500H.5zM9 4.500c1.300 1.500 1.300 3.500 0 5M11.500 2.500c2.300 2.800 2.300 6.200 0 9" /><path d="M13.700 .5c3.300 4 3.300 9 0 13" stroke="#888" /></Icon></Tray>
        <Tray $ml={7}><Icon w={17} h={17} c="#fff"><circle cx="8" cy="8" r="7.300" /><path d="M1.500 5h13M1.500 11h7M8 .7v9M8 .7c-4 4-4 10.600 0 14.600M8 .7c2.500 2.500 3.300 5 3.200 8" /><circle cx="12.500" cy="12.500" r="3.300" fill="#2a2625" /><path d="M10.300 10.300l4.400 4.400" /></Icon></Tray>
        <Tray $ml={9}><Txt $f={UI} $s={12} $c="#fff" $ls={-0.3}>ENG</Txt></Tray>
        <Clock><Txt $f={UI} $s={12} $c="#fff" $ls={-0.6}>12:34</Txt><Txt $f={UI} $s={12} $c="#fff" $ls={-0.55}>17-10-2023</Txt></Clock>
        <Tray $ml={13}><Icon w={17} h={16} c="#fff" sw={1.2}><path d="M.6 .6h15.800v11.500h-5l-2.900 3-2.900-3h-5z" /></Icon></Tray>
        <Tray $ml={19}><Icon w={1} h={40} c="#777"><path d="M.5 0v40" /></Icon></Tray>
      </Taskbar>
    </Window>
  );
}
